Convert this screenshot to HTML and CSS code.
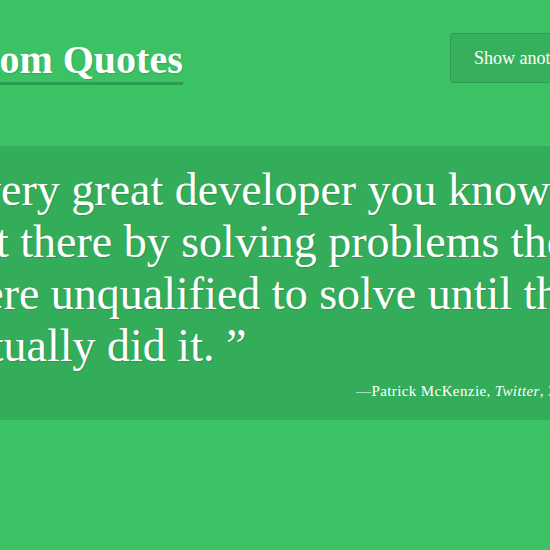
FILE: index.html
```html
<!DOCTYPE html>
<html>
<head>
<meta charset="utf-8">
<link rel="stylesheet" href="styles.css">
</head>
<body>
<div class="page">
  <header class="header">
    <div class="brand"><h1 class="title">Random Quotes</h1></div>
    <button class="btn">Show another quote</button>
  </header>
  <section class="quote">
    <p class="quote-text">Every great developer you know<br>got there by solving problems they<br>were unqualified to solve until they<br>actually did it. <span class="mark">”</span></p>
    <p class="cite">—Patrick McKenzie, <em>Twitter</em>, 2016</p>
  </section>
</div>
</body>
</html>
```

FILE: styles.css
```css
html, body {
  margin: 0;
  padding: 0;
}
body {
  background: #3bc264;
  color: #fff;
  font-family: "Liberation Serif", "Times New Roman", serif;
  overflow: hidden;
  width: 550px;
  height: 550px;
}
.page {
  width: 900px;
  margin-left: -94px;
  padding-top: 33px;
}
.header {
  display: flex;
  align-items: flex-start;
}
.brand {
  flex: 0 0 544px;
}
.title {
  display: inline-block;
  margin: 4px 0 0;
  font-size: 40px;
  font-weight: bold;
  line-height: 45px;
  border-bottom: 3px solid #2f9b50;
  text-shadow: 1px 1px 1px rgba(0, 0, 0, 0.12);
  white-space: nowrap;
}
.btn {
  height: 50px;
  padding: 0 23px;
  background: #37b05d;
  border: 1px solid #2f9d51;
  border-radius: 3px;
  color: #fff;
  font-family: inherit;
  font-size: 18px;
  white-space: nowrap;
}
.quote {
  margin-top: 61px;
  background: #34ad5a;
  padding: 18px 0 20px 44px;
}
.quote-text {
  margin: 0;
  font-size: 46px;
  line-height: 52px;
  white-space: nowrap;
  text-shadow: 1px 1px 1px rgba(0, 0, 0, 0.12);
}
.cite {
  margin: 11px 0 0;
  padding-left: 406px;
  font-size: 15px;
  letter-spacing: 0.4px;
  line-height: 17px;
  white-space: nowrap;
}
```
